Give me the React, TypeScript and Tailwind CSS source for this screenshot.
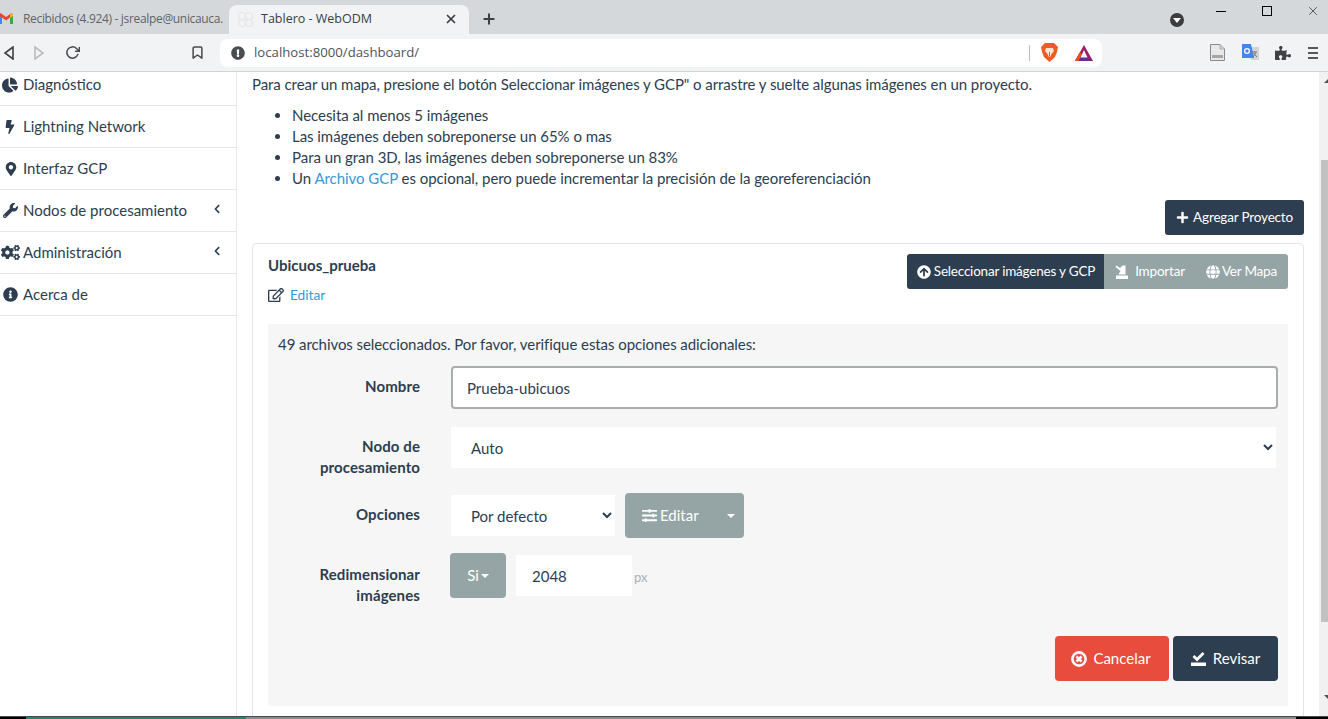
import React from "react";
import {
  FaChartPie, FaBolt, FaMapMarkerAlt, FaWrench, FaCogs, FaInfoCircle, FaChevronLeft,
  FaPlus, FaArrowCircleUp, FaGlobe, FaSlidersH, FaPuzzlePiece, FaExclamationCircle, FaRegEdit,
} from "react-icons/fa";
import { FiX, FiPlus, FiRotateCw, FiBookmark } from "react-icons/fi";

const lato = { fontFamily: "Lato, sans-serif" };

function GmailIcon() {
  return (
    <svg width="14" height="11" viewBox="0 0 14 11" className="ml-[-1px]">
      <path d="M0 1.5 V11 H3 V4.5 L7 7.5 L11 4.5 V11 H14 V1.5 L12.5 0 L7 4 L1.5 0 Z" fill="#ea4335" />
      <path d="M0 3 V11 H3 V4.5 Z" fill="#4285f4" />
      <path d="M14 3 V11 H11 V4.5 Z" fill="#34a853" />
      <path d="M11 1.5 L12.5 0 L14 1.5 V3 L11 5 Z" fill="#fbbc04" />
    </svg>
  );
}

function ImportIcon() {
  return (
    <svg width="14" height="14" viewBox="0 0 14 14" fill="currentColor">
      <rect x="1" y="10.5" width="12" height="3.5" />
      <path d="M1.5 0.5 L5 3 L7 1 L8 0.5 H10.5 V9.5 H3.5 L5.5 6 L0.5 2 Z" />
    </svg>
  );
}

function SavedIcon() {
  return (
    <svg width="15" height="14" viewBox="0 0 15 14" fill="currentColor">
      <rect x="0" y="10.5" width="15" height="3.5" />
      <path d="M1.5 5 L3.5 3 L6 5.5 L11.5 0 L13.5 2 L6 9.5 Z" />
    </svg>
  );
}

function CancelIcon() {
  return (
    <svg width="16" height="16" viewBox="0 0 16 16">
      <circle cx="8" cy="8" r="6.6" fill="none" stroke="currentColor" strokeWidth="2.6" />
      <path d="M5.5 5.5 L10.5 10.5 M10.5 5.5 L5.5 10.5" stroke="currentColor" strokeWidth="2.6" />
    </svg>
  );
}

function BraveIcon() {
  return (
    <svg width="17" height="19" viewBox="0 0 17 19">
      <path d="M4 0 H13 L15 2 L17 4 L16 9 L14 14 L8.5 19 L3 14 L1 9 L0 4 L2 2 Z" fill="#f15a22" />
      <path d="M5 5 H12 L13 8 L10.5 11 L9.5 13.5 H7.5 L6.5 11 L4 8 Z" fill="#ffe3d6" />
      <path d="M8.5 9 V13" stroke="#f15a22" strokeWidth="1" />
    </svg>
  );
}

function BatIcon() {
  return (
    <svg width="18" height="16" viewBox="0 0 18 16">
      <path d="M9 0 L18 16 H0 Z" fill="#9e1f63" />
      <path d="M0 16 L4 9 L6.5 13 H11.5 L18 16 Z" fill="#662d91" />
      <path d="M0 16 L5 7 L6.5 9.5 L3.5 16 Z" fill="#ff5000" />
      <path d="M9 5 L12.5 12.5 H5.5 Z" fill="#f1f3f4" />
    </svg>
  );
}

function DocIcon() {
  return (
    <svg width="15" height="17" viewBox="0 0 15 17">
      <path d="M0.5 0.5 H10 L14.5 5 V16.5 H0.5 Z" fill="#e8e8e8" stroke="#8a8a8a" />
      <path d="M10 0.5 V5 H14.5" fill="#cfcfcf" stroke="#b0b0b0" />
      <rect x="2" y="11" width="11" height="3" fill="#a5a5a5" />
    </svg>
  );
}

function TranslateIcon() {
  return (
    <svg width="17" height="17" viewBox="0 0 17 17">
      <path d="M7 3 H17 V16 H9 Z" fill="#d4d4d4" />
      <path d="M0 0 H9 L12 14 H0 Z" fill="#4285f4" />
      <circle cx="5" cy="7" r="2.4" fill="none" stroke="#ffffff" strokeWidth="1.3" />
      <path d="M10 8 H15 M12.5 7 V8 M11 13 L14 8.5 M11.5 9 L15 13" stroke="#6a7a80" strokeWidth="1" fill="none" />
    </svg>
  );
}

const nav = [
  { icon: <FaChartPie size={16} />, label: "Diagnóstico", h: "h-[34px] pb-[8px]", x: "pl-[2px]" },
  { icon: <FaBolt size={14} />, label: "Lightning Network", h: "h-[42px]", x: "pl-[3px]" },
  { icon: <FaMapMarkerAlt size={14} />, label: "Interfaz GCP", h: "h-[42px]", x: "pl-[4px]" },
  { icon: <FaWrench size={15} />, label: "Nodos de procesamiento", h: "h-[42px]", x: "pl-[3px]", caret: true },
  { icon: <FaCogs size={19} />, label: "Administración", h: "h-[42px]", x: "pl-[1px]", caret: true },
  { icon: <FaInfoCircle size={15} />, label: "Acerca de", h: "h-[42px]", x: "pl-[3px]" },
];

function Sidebar() {
  return (
    <aside className="w-[237px] shrink-0 border-r border-[#e7e7e7] bg-white text-[15px] text-[#2c3e50]">
      {nav.map((n) => (
        <div key={n.label} className={`flex items-center border-b border-[#e7e7e7] ${n.h}`}>
          <span className={`flex w-[23px] shrink-0 ${n.x}`}>{n.icon}</span>
          <span>{n.label}</span>
          {n.caret && <FaChevronLeft size={10} className="ml-auto mr-[14px] mb-[4px]" />}
        </div>
      ))}
    </aside>
  );
}

function Label({ children }: { children: React.ReactNode }) {
  return <div className="w-[142px] shrink-0 text-right text-[15px] font-bold leading-[21px] tracking-[0.1px] text-[#2c3e50]">{children}</div>;
}

function App() {
  return (
    <div className="flex h-[719px] w-[1328px] flex-col overflow-hidden bg-white" style={lato}>
      {/* tab strip */}
      <div className="flex h-[34px] shrink-0 items-end bg-[#d5d8db] text-[12.5px]" style={{ fontFamily: "'Open Sans', sans-serif" }}>
        <div className="flex h-[29px] w-[229px] items-center whitespace-nowrap pb-[2px] text-[#5f6368]">
          <GmailIcon />
          <span className="ml-[10px] text-[12px] tracking-[-0.33px]">Recibidos (4.924) - jsrealpe@unicauca.</span>
        </div>
        <div className="flex h-[29px] w-[240px] items-center rounded-t-[8px] bg-[#f1f3f4] pb-[1px] pl-[8px] pr-[11px] text-[#3c4043]">
          <svg width="17" height="17" viewBox="0 0 17 17" fill="none" stroke="#e4e6e8" strokeWidth="1.2">
            <circle cx="5" cy="5" r="3.5" /><circle cx="12" cy="5" r="3.5" /><circle cx="5" cy="12" r="3.5" /><circle cx="12" cy="12" r="3.5" />
          </svg>
          <span className="ml-[7px]">Tablero - WebODM</span>
          <FiX size={14} strokeWidth={3} className="ml-auto" />
        </div>
        <div className="flex h-[29px] items-center pl-[12px] pb-[1px] text-[#3c4043]">
          <FiPlus size={16} strokeWidth={3} />
        </div>
        <div className="ml-auto flex h-[34px] items-start">
          <div className="mt-[13px] mr-[32px] flex h-[14px] w-[14px] items-center justify-center rounded-full bg-[#3c3c3c]">
            <div className="mt-[1px] h-0 w-0 border-x-[4px] border-t-[5px] border-x-transparent border-t-white" />
          </div>
          <div className="flex h-[22px] items-center">
            <div className="h-[1px] w-[10px] bg-black" />
            <div className="ml-[36px] h-[10px] w-[10px] border border-black" />
            <FiX size={14} strokeWidth={1} className="ml-[34px] mr-[8px] text-black" />
          </div>
        </div>
      </div>
      {/* toolbar */}
      <div className="flex h-[38px] shrink-0 items-center border-b border-[#d2d3d4] bg-[#f1f3f4] text-[#45494d]">
        <svg width="12" height="14" viewBox="0 0 12 14" className="ml-[3px]" fill="none" stroke="#3c4043" strokeWidth="1.6"><path d="M10 1 V13 L2 7 Z" /></svg>
        <svg width="12" height="14" viewBox="0 0 12 14" className="ml-[18px]" fill="none" stroke="#b9bcbf" strokeWidth="1.6"><path d="M2 1 V13 L10 7 Z" /></svg>
        <FiRotateCw size={15} strokeWidth={2.4} className="ml-[20px]" />
        <FiBookmark size={15} strokeWidth={2.4} className="ml-[110px]" />
        <div className="ml-[15px] flex h-[28px] w-[882px] items-center rounded-[8px] bg-white pl-[11px] text-[13.2px]" style={{ fontFamily: "'Open Sans', sans-serif" }}>
          <FaExclamationCircle size={14} className="text-[#4a4d50]" />
          <span className="ml-[9px] text-[#4f5458]">localhost:8000/dashboard/</span>
          <div className="ml-auto h-[16px] w-[1px] bg-[#bbbbbb]" />
          <span className="ml-[11px] flex"><BraveIcon /></span>
          <span className="ml-[17px] mr-[9px] flex"><BatIcon /></span>
        </div>
        <span className="ml-[108px] flex"><DocIcon /></span>
        <span className="ml-[17px] flex"><TranslateIcon /></span>
        <FaPuzzlePiece size={16} className="ml-[16px] text-[#3e4245]" />
        <div className="ml-[17px] flex flex-col gap-[3px]">
          <div className="h-[2px] w-[10px] bg-[#55595c]" />
          <div className="h-[2px] w-[10px] bg-[#55595c]" />
          <div className="h-[2px] w-[10px] bg-[#55595c]" />
        </div>
      </div>
      {/* page */}
      <div className="flex min-h-0 flex-1">
        <Sidebar />
        <main className="min-w-0 flex-1 overflow-hidden px-[15px] pt-[2px] text-[15px] leading-[21px] text-[#2c3e50]">
          <p className="tracking-[-0.07px]">Para crear un mapa, presione el botón Seleccionar imágenes y GCP" o arrastre y suelte algunas imágenes en un proyecto.</p>
          <ul className="mt-[10px] list-disc pl-[40px] tracking-[-0.045px]">
            <li>Necesita al menos 5 imágenes</li>
            <li>Las imágenes deben sobreponerse un 65% o mas</li>
            <li>Para un gran 3D, las imágenes deben sobreponerse un 83%</li>
            <li>Un <span className="text-[#3498db]">Archivo GCP</span> es opcional, pero puede incrementar la precisión de la georeferenciación</li>
          </ul>
          <div className="mt-[11px] flex justify-end">
            <div className="flex h-[35px] items-center gap-[4px] rounded-[3px] bg-[#2c3e50] pl-[11px] pr-[11px] text-[13.5px] tracking-[-0.17px] text-white">
              <FaPlus size={13} /> Agregar Proyecto
            </div>
          </div>
          <section className="mt-[8px] h-[600px] rounded-[4px] border border-[#e5e5e5] px-[15px] pt-[10px]">
            <div className="flex items-start justify-between">
              <div>
                <div className="mt-[1px] font-bold">Ubicuos_prueba</div>
                <div className="mt-[8px] flex items-center text-[13.7px] text-[#3498db]">
                  <FaRegEdit size={16} className="mr-[6px] text-[#2c3e50]" />Editar
                </div>
              </div>
              <div className="flex h-[35px] overflow-hidden rounded-[3px] text-[13.5px] tracking-[-0.2px] text-white">
                <div className="flex items-center gap-[3px] bg-[#2c3e50] pl-[10px] pr-[9px]">
                  <FaArrowCircleUp size={14} />Seleccionar imágenes y GCP
                </div>
                <div className="flex items-center bg-[#95a5a6] pl-[11px] pr-[11px]">
                  <ImportIcon /><span className="ml-[6px]">Importar</span>
                  <FaGlobe size={14} className="ml-[21px] mr-[2px]" />Ver Mapa
                </div>
              </div>
            </div>
            <div className="mt-[19px] h-[382px] rounded-[2px] bg-[#f6f6f6] pl-[10px] pr-[10px] pt-[10px]">
              <div className="tracking-[-0.07px]">49 archivos seleccionados. Por favor, verifique estas opciones adicionales:</div>
              <div className="mt-[11px] flex items-start gap-[31px]">
                <Label><div className="pt-[10px]">Nombre</div></Label>
                <input readOnly value="Prueba-ubicuos" className="h-[43px] flex-1 rounded-[4px] border-2 border-[#a9adad] bg-white px-[14px] outline-none" />
              </div>
              <div className="mt-[18px] flex items-start gap-[31px]">
                <Label><div className="pt-[9px]">Nodo de procesamiento</div></Label>
                <select className="mr-[2px] h-[41px] flex-1 bg-white pl-[16px] pr-[0px] text-[15px] outline-none">
                  <option>Auto</option>
                </select>
              </div>
              <div className="mt-[15px] flex items-start gap-[31px]">
                <Label><div className="pt-[11px]">Opciones</div></Label>
                <select className="mt-[2px] h-[41px] w-[164px] bg-white pl-[16px] text-[15px] outline-none">
                  <option>Por defecto</option>
                </select>
                <div className="ml-[-21px] flex h-[45px] w-[119px] items-center rounded-[4px] bg-[#95a5a6] pl-[17px] text-white">
                  <FaSlidersH size={15} className="mr-[3px]" />Editar
                  <div className="ml-auto mr-[9px] h-0 w-0 border-x-[4px] border-t-[4px] border-x-transparent border-t-white" />
                </div>
              </div>
              <div className="mt-[15px] flex items-start gap-[30px]">
                <Label><div className="pt-[11px]">Redimensionar imágenes</div></Label>
                <div className="flex h-[45px] w-[56px] items-center justify-center gap-[2px] rounded-[4px] bg-[#95a5a6] text-white">
                  Si
                  <div className="h-0 w-0 border-x-[4px] border-t-[4px] border-x-transparent border-t-white" />
                </div>
                <input readOnly value="2048" className="ml-[-20px] mt-[2px] h-[41px] w-[116px] bg-white px-[16px] outline-none" />
                <span className="ml-[-28px] pt-[14px] text-[13px] text-[#a9b2b8]">px</span>
              </div>
              <div className="mt-[30px] flex justify-end gap-[4px]">
                <div className="flex h-[45px] w-[114px] items-center justify-center gap-[6px] rounded-[4px] bg-[#e74c3c] pr-[2px] text-white">
                  <CancelIcon />Cancelar
                </div>
                <div className="flex h-[45px] w-[105px] items-center justify-center gap-[7px] rounded-[4px] bg-[#2c3e50] text-white">
                  <SavedIcon />Revisar
                </div>
              </div>
            </div>
          </section>
        </main>
        <div className="flex w-[9px] shrink-0 flex-col bg-[#f1f1f1] pl-[2px]">
          <div className="ml-[3px] mt-[7px] h-0 w-0 border-x-[4px] border-b-[4px] border-x-transparent border-b-[#505050]" />
          <div className="mt-[77px] h-[462px] shrink-0 bg-[#c1c1c1]" />
          <div className="ml-[3px] mt-[73px] h-0 w-0 border-x-[4px] border-t-[4px] border-x-transparent border-t-[#505050]" />
        </div>
      </div>
      {/* bottom strip */}
      <div className="flex h-[3px] shrink-0 border-t border-[#4a4a4a]">
        <div className="w-[26px] bg-black" />
        <div className="w-[220px] bg-[#2f8069]" />
        <div className="flex-1 bg-[#8c8c8c]" />
        <div className="w-[32px] bg-black" />
      </div>
    </div>
  );
}

export default App;
